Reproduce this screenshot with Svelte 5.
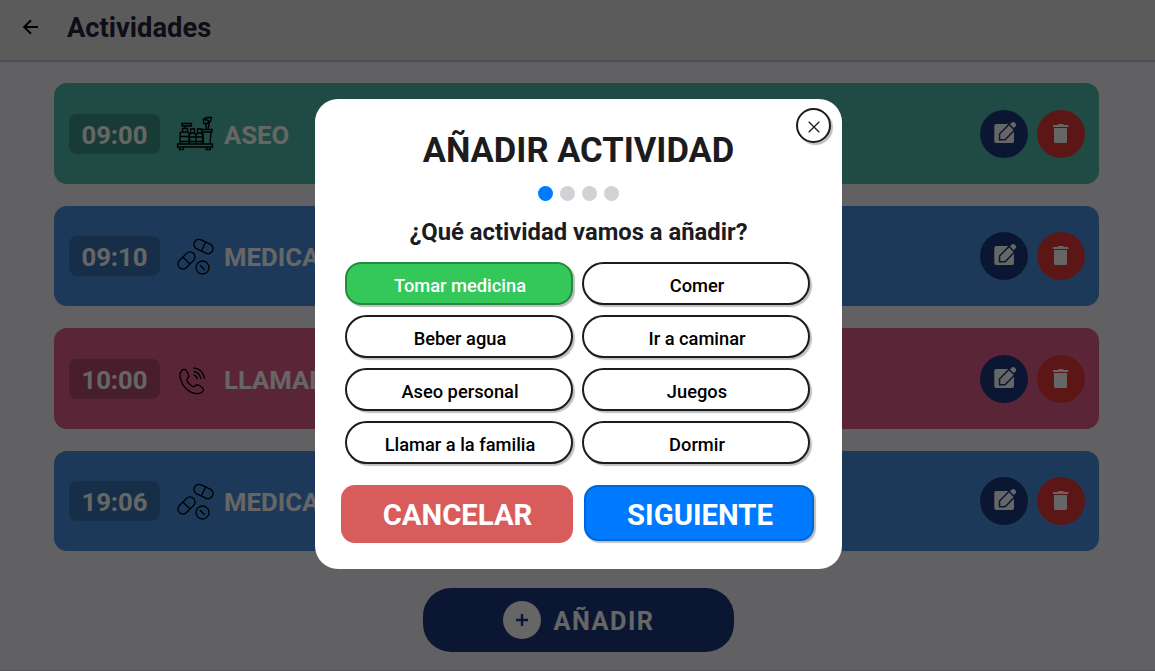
<script>
	let selected = 'Tomar medicina';
	let step = 0;
	let showModal = true;

	const options = [
		'Tomar medicina', 'Comer',
		'Beber agua', 'Ir a caminar',
		'Aseo personal', 'Juegos',
		'Llamar a la familia', 'Dormir'
	];
	const activities = [
		{ time: '09:00', name: 'ASEO', type: 'aseo' },
		{ time: '09:10', name: 'MEDICACIÓN', type: 'medicina' },
		{ time: '10:00', name: 'LLAMADA', type: 'llamada' },
		{ time: '19:06', name: 'MEDICACIÓN', type: 'medicina' }
	];

	const closeModal = function(){
		showModal = false;
	}
	const openModal = function(){
		step = 0;
		showModal = true;
	}
	const nextStep = function(){
		if(step < 3) step = step + 1;
	}
</script>

<div class="page">
	<header class="header">
		<svg class="back" viewBox="0 0 16 16"><path d="M15 8H1.5M8 1.2 1.2 8 8 14.8" /></svg>
		<h1>Actividades</h1>
	</header>

	<div class="list">
		{#each activities as activity}
			<div class="card {activity.type}">
				<span class="time">{activity.time}</span>
				<svg class="typeIcon" viewBox="0 0 38 38">
					{#if activity.type === 'aseo'}
						<path d="M1.500 29h35v3h-35zM3.500 32h4v2.500h-4zM30.500 32h4v2.500h-4zM4 29v-9.500q0-2.500 2.500-2.500h4.500q2 0 2 2.500V29M4 21.500h9M4 26.500h9M6.500 17v-3.500h5V17M9 13.500V11M6 8.500h9.500V11H6zM13.500 29v-9l1.500-2h3.500l1.500 2v9M13.500 22h6.500M13.500 26.500h6.500M14.500 18v-4h4v4M20 29v-9l1.500-2h3.500l1.500 2v9M20 22h6.500M20 26.500h6.500M21.500 18v-4h4v4M25 14.500h11V17H25.500M27 17l.5 12M35 17l-1 12M30.500 14l-1-5M32 14l1.500-7M27.500 8.500V4h2.500M27.500 8.500h4L33 5M29.500 2.500h6l-1 4-3 1.500M29.500 2.500V5h3" />
					{:else if activity.type === 'medicina'}
						<g transform="rotate(-45 10.500 23.500)"><rect x="0.500" y="18.500" width="20" height="10" rx="5" /><path d="M10.500 18.500v10" /></g>
						<g transform="rotate(26 27.500 9.500)"><rect x="17.500" y="4.500" width="20" height="10" rx="5" /><path d="M27.500 4.500v10" /></g>
						<circle cx="26.500" cy="30.500" r="6.500" /><path d="m23.800 28 5 5" />
					{:else}
						<path d="M5.500 11q-2.500 3-1 8 2 6.500 7 11 5.500 4.500 11.500 3.500 3-.5 4.500-3 0-3-5-5.500-2-1-4 1.500-1.500 1-5-2.500-3.500-3.500-2.500-5 2.500-2 1.500-4-2-6-5-5.500-1.500 0-2 1.500M17.500 8q9.500.5 11 11M17.500 11.500q6 .5 7.500 7.500M17.500 15q3 .5 4 4" />
					{/if}
				</svg>
				<span class="name">{activity.name}</span>
				<div class="actions">
					<button class="round edit" aria-label="Editar">
						<svg viewBox="0 0 24 24">
							<rect x="2.300" y="2" width="19.700" height="19" rx="2" />
							<path class="pencil" d="M8.300 17.100v-4.800L17 3.500l4.500 4.500-8.700 9.100z" />
							<path d="m18.400 2 1.400-1.500q1.500-1.200 3.100.2 2 1.700 1 3.200l-1.400 1.700q-.8-2.600-4.100-3.600z" />
						</svg>
					</button>
					<button class="round delete" aria-label="Borrar">
						<svg viewBox="0 0 24 24"><path d="M4 3h4.500l1-1h4.500l1 1h4.300v2H4zM5 6h13v13.500a1.500 1.500 0 0 1-1.500 1.500h-10A1.500 1.500 0 0 1 5 19.500z" /></svg>
					</button>
				</div>
			</div>
		{/each}
	</div>

	<button class="add" on:click={openModal}>
		<span class="plus"><svg viewBox="0 0 12 12"><path d="M6 0v12M0 6h12" /></svg></span>
		<span class="addText">AÑADIR</span>
	</button>
	<div class="tabBar"></div>
</div>

{#if showModal}
	<div class="overlay">
		<div class="modal">
			<button class="close" aria-label="Cerrar" on:click={closeModal}>
				<svg viewBox="0 0 12 12"><path d="m.7.7 10.600 10.600M11.300.7.7 11.300" /></svg>
			</button>
			<h2>AÑADIR ACTIVIDAD</h2>
			<div class="dots">
				{#each [0, 1, 2, 3] as dot}
					<span class:active={dot === step}></span>
				{/each}
			</div>
			<h3>¿Qué actividad vamos a añadir?</h3>
			<div class="options">
				{#each options as option}
					<button class="option" class:selected={option === selected} on:click={() => selected = option}>{option}</button>
				{/each}
			</div>
			<div class="footer">
				<button class="cancel" on:click={closeModal}>CANCELAR</button>
				<button class="next" on:click={nextStep}>SIGUIENTE</button>
			</div>
		</div>
	</div>
{/if}

<style>
	:global(body){
		overflow: hidden;
		font-family: Roboto, sans-serif;
	}
	button{
		font-family: inherit;
		padding: 0;
		border: none;
		cursor: pointer;
	}
	.page{
		display: flex;
		flex-direction: column;
		height: 671px;
		background-color: #f2f2f7;
	}
	.header{
		display: flex;
		align-items: center;
		box-sizing: border-box;
		height: 62px;
		padding: 0 0 6px 23px;
		background-color: #e4e4e4;
		border-bottom: 2px solid #c5bedc;
	}
	.back{
		width: 16px;
		height: 16px;
		fill: none;
		stroke: #000;
		stroke-width: 2;
	}
	h1{
		margin: 2px 0 0 28px;
		font-size: 27.3px;
		font-weight: 700;
		color: #26213a;
	}
	.list{
		display: flex;
		flex-direction: column;
		gap: 22.2px;
		padding: 21.4px 56px 0 54px;
	}
	.card{
		display: flex;
		align-items: center;
		box-sizing: border-box;
		height: 100.3px;
		padding: 0 14px 0 15px;
		border-radius: 13px;
		color: #fff;
		font-size: 25.7px;
		font-weight: 700;
	}
	.aseo{
		background-color: #50b8aa;
	}
	.medicina{
		background-color: #4a90e2;
	}
	.llamada{
		background-color: #e15d8a;
	}
	.time{
		width: 91px;
		height: 40px;
		line-height: 42px;
		border-radius: 8px;
		text-align: center;
		background-color: rgba(0, 0, 0, 0.2);
	}
	.typeIcon{
		width: 38px;
		height: 38px;
		margin-left: 16px;
		fill: none;
		stroke: #000;
		stroke-width: 1.3;
	}
	.name{
		margin: 2px 0 0 10px;
	}
	.actions{
		display: flex;
		gap: 9px;
		margin-left: auto;
	}
	.round{
		display: grid;
		place-items: center;
		width: 48px;
		height: 48px;
		border-radius: 50%;
	}
	.round svg{
		width: 24px;
		height: 24px;
		fill: #fff;
		overflow: visible;
	}
	.edit{
		background-color: #1c3a7d;
	}
	.pencil{
		stroke: #1c3a7d;
		stroke-width: 3;
		paint-order: stroke;
	}
	.delete{
		background-color: #e53935;
	}
	.add{
		display: flex;
		flex-shrink: 0;
		align-items: center;
		justify-content: center;
		gap: 12px;
		align-self: center;
		box-sizing: border-box;
		width: 311px;
		height: 64px;
		margin: 37px 0 0 2px;
		padding-left: 1px;
		border-radius: 28px;
		background-color: #1c3a7d;
		color: #fff;
		font-size: 25.3px;
		font-weight: 700;
		letter-spacing: 1.5px;
	}
	.addText{
		margin-top: 2px;
	}
	.plus{
		display: grid;
		place-items: center;
		width: 38px;
		height: 38px;
		border-radius: 50%;
		background-color: #fff;
	}
	.plus svg{
		width: 12px;
		height: 12px;
		stroke: #1c3a7d;
		stroke-width: 2.4;
	}
	.tabBar{
		margin-top: auto;
		height: 1px;
		background-color: #d4d0e2;
	}
	.overlay{
		position: absolute;
		top: 0;
		left: 0;
		display: flex;
		justify-content: center;
		align-items: center;
		box-sizing: border-box;
		width: 1155px;
		height: 671px;
		padding: 0 0 3px 2px;
		background-color: rgba(0, 0, 0, 0.6);
	}
	.modal{
		position: relative;
		display: flex;
		flex-direction: column;
		align-items: center;
		box-sizing: border-box;
		width: 526.500px;
		height: 470px;
		padding-top: 30px;
		border-radius: 23px;
		background-color: #fff;
	}
	.close{
		position: absolute;
		top: 9px;
		right: 11px;
		display: grid;
		place-items: center;
		width: 35px;
		height: 35px;
		padding: 3px 0 0 2px;
		border: 2px solid #1c1c1e;
		border-radius: 50%;
		background-color: #fff;
		box-shadow: 2px 2px 1px rgba(0, 0, 0, 0.25);
	}
	.close svg{
		width: 12px;
		height: 12px;
		stroke: #1c1c1e;
		stroke-width: 1.3;
	}
	h2{
		margin: 0;
		line-height: 42px;
		font-size: 34.6px;
		font-weight: 700;
		color: #1c1c1e;
	}
	.dots{
		display: flex;
		gap: 7px;
		margin-top: 15px;
	}
	.dots span{
		width: 15px;
		height: 15px;
		border-radius: 50%;
		background-color: #d1d1d6;
	}
	.dots .active{
		background-color: #007aff;
	}
	h3{
		margin: 16px 0 0;
		line-height: 30px;
		font-size: 23.800px;
		font-weight: 700;
		color: #1c1c1e;
	}
	.options{
		display: grid;
		grid-template-columns: 228px 228px;
		gap: 10px 9px;
		margin: 15px 2px 0 0;
	}
	.option{
		height: 43px;
		padding: 4px 0 0 2px;
		border: 2px solid #1c1c1e;
		border-radius: 22px;
		background-color: #fff;
		box-shadow: 2px 2px 1px rgba(0, 0, 0, 0.25);
		color: #000;
		font-size: 18.3px;
		font-weight: 500;
	}
	.selected{
		border-color: #248a3d;
		border-radius: 16px;
		background-color: #34c759;
		color: #fff;
	}
	.footer{
		display: flex;
		gap: 11px;
		margin: 21px 2px 0 0;
	}
	.footer button{
		border-radius: 14px;
		color: #fff;
		font-size: 29.3px;
		font-weight: 700;
	}
	.footer .cancel{
		width: 232px;
		height: 58px;
		padding: 2px 0 0 1px;
		background-color: #d85c5c;
	}
	.footer .next{
		width: 230px;
		height: 56px;
		padding: 4px 0 0 2px;
		border: 2px solid #0066d4;
		background-color: #007aff;
		box-shadow: 2px 2px 1px rgba(0, 0, 0, 0.25);
	}
</style>
